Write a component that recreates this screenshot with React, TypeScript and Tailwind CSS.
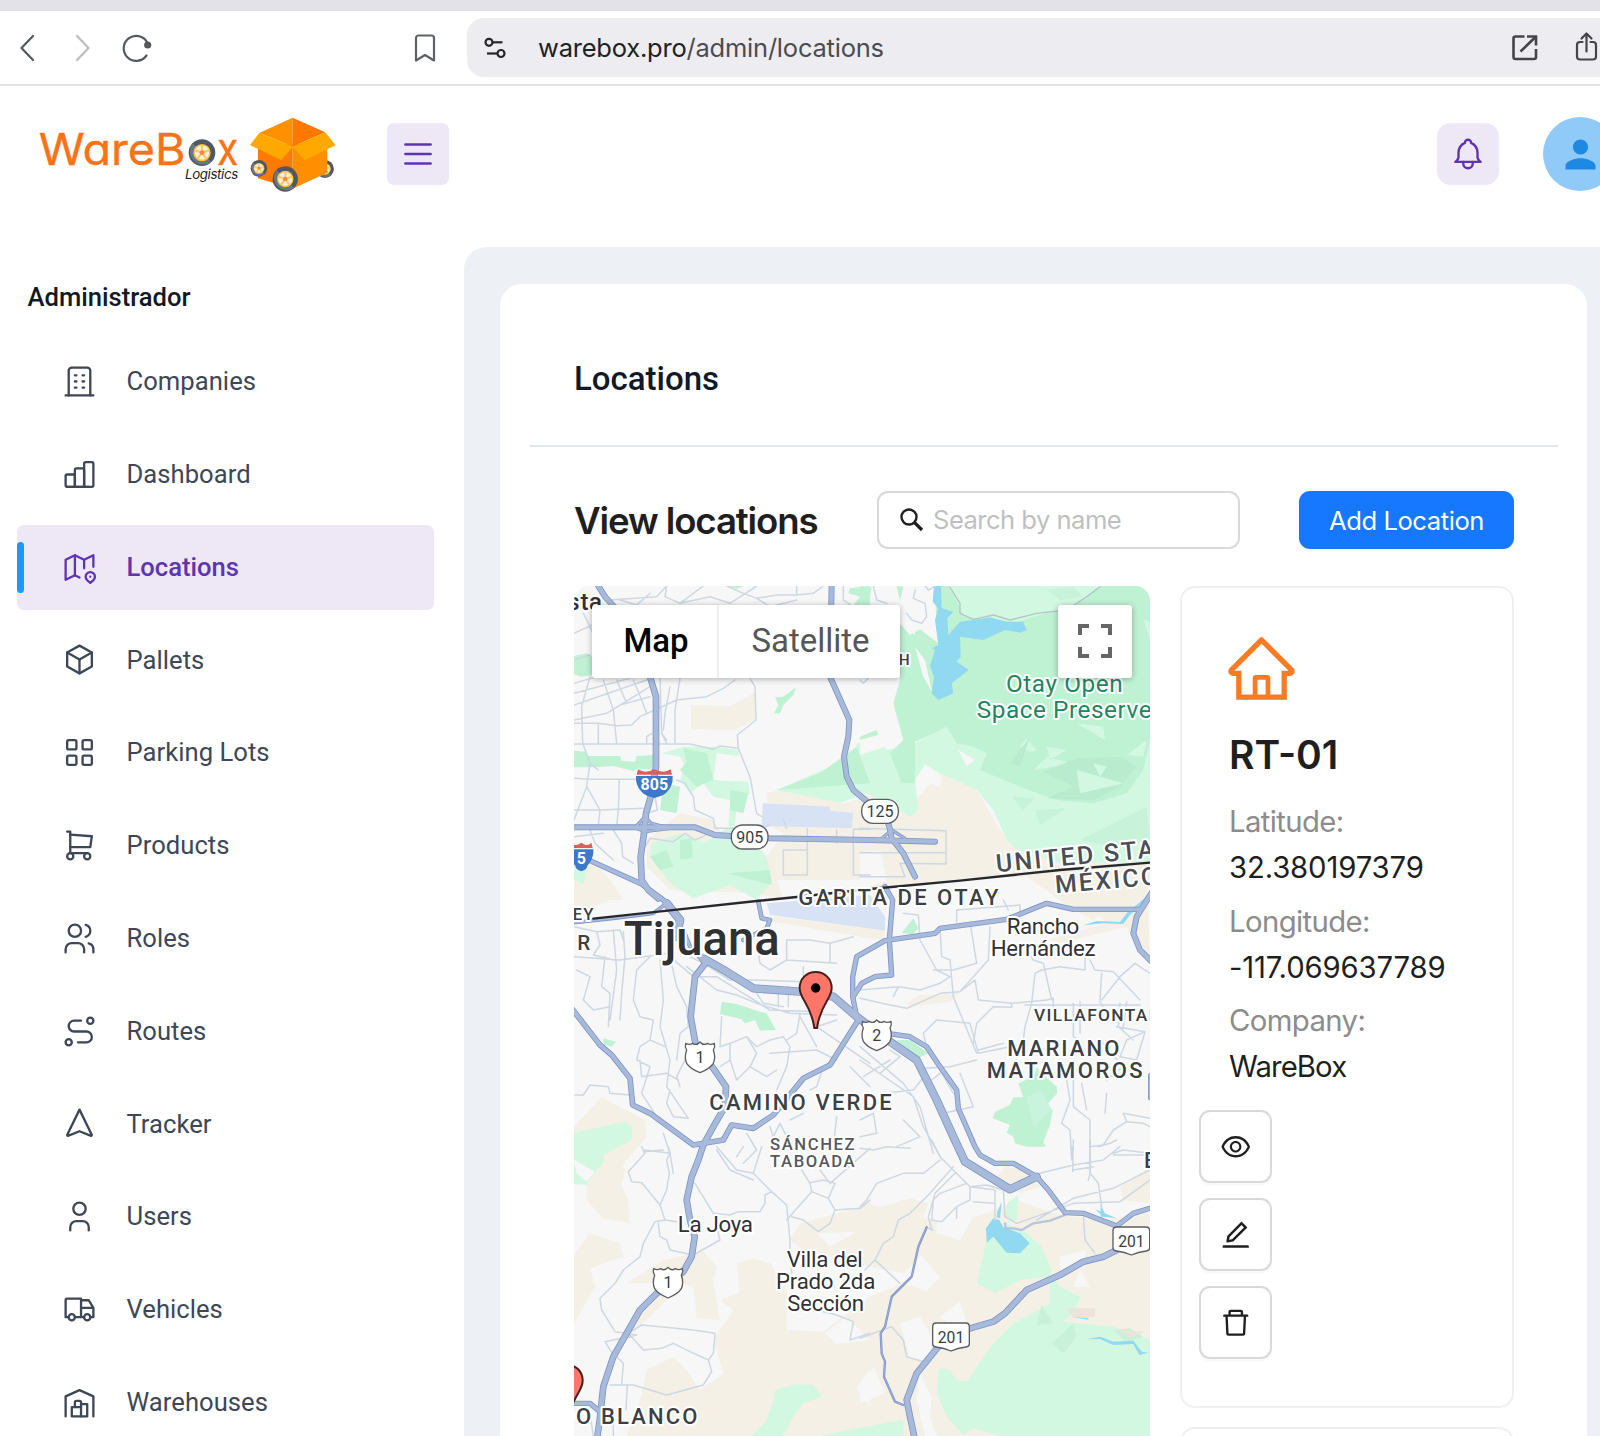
import React from "react";
import {
  AiOutlineHome,
  AiOutlineEye,
  AiOutlineEdit,
  AiOutlineDelete,
} from "react-icons/ai";
import { MdPerson } from "react-icons/md";

/* ---------- Shared outline icon ---------- */

function Outline({ paths, className }: { paths: string[]; className: string }) {
  return (
    <svg
      viewBox="0 0 24 24"
      fill="none"
      stroke="currentColor"
      strokeWidth={1.5}
      strokeLinecap="round"
      strokeLinejoin="round"
      className={className}
    >
      {paths.map((d) => (
        <path key={d} d={d} />
      ))}
    </svg>
  );
}

const ICONS: Record<string, string[]> = {
  building: [
    "M3 21h18",
    "M9 8h1M9 12h1M9 16h1M14 8h1M14 12h1M14 16h1",
    "M5 21V5a2 2 0 0 1 2-2h10a2 2 0 0 1 2 2v16",
  ],
  chart: [
    "M4 12h4a1 1 0 0 1 1 1v6a1 1 0 0 1-1 1H4a1 1 0 0 1-1-1v-6a1 1 0 0 1 1-1z",
    "M10 8h4a1 1 0 0 1 1 1v10a1 1 0 0 1-1 1h-4a1 1 0 0 1-1-1V9a1 1 0 0 1 1-1z",
    "M16 4h4a1 1 0 0 1 1 1v14a1 1 0 0 1-1 1h-4a1 1 0 0 1-1-1V5a1 1 0 0 1 1-1z",
    "M4 20h14",
  ],
  map: [
    "M12 18.5l-3-1.5l-6 3V7l6-3l6 3l6-3v7.5",
    "M9 4v13",
    "M15 7v5.5",
    "M21.121 20.121a3 3 0 1 0-4.242 0c.418.419 1.125 1.045 2.121 1.879c1.051-.89 1.759-1.516 2.121-1.879z",
    "M19 18v.01",
  ],
  box: ["M12 3l8 4.5v9l-8 4.5l-8-4.5v-9l8-4.5", "M12 12l8-4.5", "M12 12v9", "M12 12L4 7.5"],
  grid: [
    "M5 4h4a1 1 0 0 1 1 1v4a1 1 0 0 1-1 1H5a1 1 0 0 1-1-1V5a1 1 0 0 1 1-1z",
    "M15 4h4a1 1 0 0 1 1 1v4a1 1 0 0 1-1 1h-4a1 1 0 0 1-1-1V5a1 1 0 0 1 1-1z",
    "M5 14h4a1 1 0 0 1 1 1v4a1 1 0 0 1-1 1H5a1 1 0 0 1-1-1v-4a1 1 0 0 1 1-1z",
    "M15 14h4a1 1 0 0 1 1 1v4a1 1 0 0 1-1 1h-4a1 1 0 0 1-1-1v-4a1 1 0 0 1 1-1z",
  ],
  cart: [
    "M4 19a2 2 0 1 0 4 0a2 2 0 1 0-4 0",
    "M15 19a2 2 0 1 0 4 0a2 2 0 1 0-4 0",
    "M17 17H6V3H4",
    "M6 5l14 1l-1 7H6",
  ],
  users: [
    "M5 7a4 4 0 1 0 8 0a4 4 0 1 0-8 0",
    "M3 21v-2a4 4 0 0 1 4-4h4a4 4 0 0 1 4 4v2",
    "M16 3.13a4 4 0 0 1 0 7.75",
    "M21 21v-2a4 4 0 0 0-3-3.85",
  ],
  route: [
    "M3 19a2 2 0 1 0 4 0a2 2 0 1 0-4 0",
    "M17 5a2 2 0 1 0 4 0a2 2 0 1 0-4 0",
    "M11 19h5.5a3.5 3.5 0 0 0 0-7h-8a3.5 3.5 0 0 1 0-7H13",
  ],
  nav: ["M12 3l8 16.5l-.5.5l-7.500-3l-7.500 3l-.5-.5z"],
  user: ["M8 7a4 4 0 1 0 8 0a4 4 0 0 0-8 0", "M6 21v-2a4 4 0 0 1 4-4h4a4 4 0 0 1 4 4v2"],
  truck: [
    "M5 17a2 2 0 1 0 4 0a2 2 0 1 0-4 0",
    "M15 17a2 2 0 1 0 4 0a2 2 0 1 0-4 0",
    "M5 17H3V6a1 1 0 0 1 1-1h9v12m-4 0h6m4 0h2v-6h-8m0-5h5l3 5",
  ],
  warehouse: [
    "M3 21V8l9-4l9 4v13",
    "M13 13h4v8H7v-6h6",
    "M13 21v-9a1 1 0 0 0-1-1h-2a1 1 0 0 0-1 1v3",
  ],
  bell: [
    "M10 5a2 2 0 1 1 4 0a7 7 0 0 1 4 6v3a4 4 0 0 0 2 3H4a4 4 0 0 0 2-3v-3a7 7 0 0 1 4-6",
    "M9 17v1a3 3 0 0 0 6 0v-1",
  ],
  menu: ["M4 6h16", "M4 12h16", "M4 18h16"],
};

/* ---------- Browser toolbar ---------- */

function BrowserBar() {
  return (
    <div>
      <div className="h-[11px] bg-[#e3e2e8]" />
      <div className="flex h-[75px] items-center border-b-2 border-[#e4e4e7] bg-white">
        <svg className="ml-[16px] h-[40px] w-[140px] shrink-0" viewBox="0 0 140 40" fill="none" strokeWidth="2.2" strokeLinecap="round" strokeLinejoin="round">
          <path d="M17 8L5.500 20l11.500 12" stroke="#55585d" />
          <path d="M61 8L72.500 20l-11.500 12" stroke="#bcbdc0" />
          <path d="M131.500 15A12.500 12.500 0 1 0 130.500 27.500" stroke="#55585d" />
          <circle cx="131.700" cy="17" r="3.600" fill="#55585d" />
        </svg>
        <svg className="ml-[254px] h-[40px] w-[30px] shrink-0" viewBox="0 0 30 40" fill="none" stroke="#5d6065" strokeWidth="2.200" strokeLinejoin="round">
          <path d="M8.500 7.500h13a2.500 2.500 0 0 1 2.500 2.500v22.500L15 27l-9 5.500V10a2.500 2.500 0 0 1 2.500-2.500z" />
        </svg>
        <div className="ml-[27px] flex h-[59px] flex-1 items-center rounded-l-[17px] bg-[#edecf1] pl-[16px]">
          <svg className="h-[30px] w-[30px] shrink-0" viewBox="0 0 30 30" fill="none" stroke="#26272b" strokeWidth="2.200">
            <circle cx="6" cy="9.300" r="3.500" />
            <path d="M9.500 9.300H19.500" />
            <circle cx="18" cy="20.500" r="3.500" />
            <path d="M4 20.500h10.500" />
          </svg>
          <div className="ml-[25px] mt-[2px] whitespace-nowrap font-[Inter] text-[25.500px] tracking-[-0.22px] text-[#4b4c51]">
            <span className="text-[#202124]">warebox.pro</span>/admin/locations
          </div>
          <div className="flex-1" />
          <svg className="h-[40px] w-[89px] shrink-0" viewBox="0 0 89 40" fill="none" stroke="#444549">
            <path d="M13.500 8.500H4.500a2 2 0 0 0-2 2v18.500a2 2 0 0 0 2 2h18.500a2 2 0 0 0 2-2V21" strokeWidth="2.600" />
            <path d="M16 8.500h9v9" strokeWidth="2.600" />
            <path d="M9.500 23.500L24.500 9" strokeWidth="2.600" />
            <g strokeWidth="2.200" strokeLinecap="round" strokeLinejoin="round">
              <path d="M71.500 14h-2.500a3 3 0 0 0-3 3v11.500a3 3 0 0 0 3 3h13a3 3 0 0 0 3-3V17a3 3 0 0 0-3-3h-2.500" />
              <path d="M75.500 23.500V6M70.500 10.500l5-5l5 5" />
            </g>
          </svg>
        </div>
      </div>
    </div>
  );
}

/* ---------- Logo ---------- */

function Wheel({ x, y, r }: { x: number; y: number; r: number }) {
  return (
    <g transform={`translate(${x} ${y}) scale(${r / 40})`}>
      <circle r="40" fill="#505862" />
      <path d="M-28-28A40 40 0 0 0 28 28z" fill="#6a7684" />
      <circle r="26" fill="#f6c544" />
      <circle r="21.500" fill="#fdf0dc" />
      <path d="M0 0V-22M0 0L21-7M0 0L13 18M0 0L-13 18M0 0L-21-7" stroke="#f8ca6a" strokeWidth="7" />
      <circle r="7" fill="#f58a3c" />
    </g>
  );
}

function Logo() {
  return (
    <svg className="h-[78.300px] w-[303.300px] shrink-0" viewBox="110 345 910 235">
      <text x="115" y="494" textLength="441" lengthAdjust="spacingAndGlyphs" fontFamily="Inter" fontSize="131" fill="#f97316" stroke="#f97316" strokeWidth="1" style={{ fontFeatureSettings: "'cv11' 1" }}>
        WareB
      </text>
      <text x="650" y="494" textLength="64" lengthAdjust="spacingAndGlyphs" fontFamily="Inter" fontSize="136" fill="#f97316" stroke="#f97316" strokeWidth="1">
        x
      </text>
      <Wheel x={605} y={458} r={40} />
      <text x="554" y="536" textLength="160" fontFamily="Inter" fontSize="40" fontStyle="italic" fill="#1f2024" style={{ fontFeatureSettings: "'cv11' 1" }}>
        Logistics
      </text>
      <Wheel x={974} y={507} r={27} />
      <path d="M773 440L877 430V566L773 535z" fill="#ff7a00" />
      <path d="M877 430L981 440V518L877 566z" fill="#ff8f00" />
      <path d="M778 398L877 353V440z" fill="#ff9100" />
      <path d="M877 353L975 397L877 440z" fill="#ff7800" />
      <path d="M778 398L877 440L843 481L749 435z" fill="#ffa800" />
      <path d="M975 397L877 440L913 481L1006 436z" fill="#ffa800" />
      <Wheel x={776} y={505} r={25} />
      <Wheel x={855} y={537} r={38} />
    </svg>
  );
}

function Header() {
  return (
    <header className="flex h-[136px] shrink-0 items-center">
      <div className="ml-[37px]">
        <Logo />
      </div>
      <button className="ml-[47px] flex h-[62px] w-[62px] items-center justify-center rounded-[7px] bg-[#ede7f6] text-[#5e35b1]">
        <Outline paths={ICONS.menu} className="h-[38px] w-[38px]" />
      </button>
      <div className="flex-1" />
      <button className="flex h-[62px] w-[62px] items-center justify-center rounded-[14px] bg-[#ede7f6] text-[#5e35b1]">
        <Outline paths={ICONS.bell} className="h-[38px] w-[38px]" />
      </button>
      <div className="-mr-[17px] ml-[44px] flex h-[74px] w-[74px] shrink-0 items-center justify-center rounded-full bg-[#90caf9]">
        <MdPerson className="h-[45px] w-[45px] text-[#1e88e5]" />
      </div>
    </header>
  );
}

/* ---------- Sidebar ---------- */

const NAV: { label: string; icon: string }[] = [
  { label: "Companies", icon: "building" },
  { label: "Dashboard", icon: "chart" },
  { label: "Locations", icon: "map" },
  { label: "Pallets", icon: "box" },
  { label: "Parking Lots", icon: "grid" },
  { label: "Products", icon: "cart" },
  { label: "Roles", icon: "users" },
  { label: "Routes", icon: "route" },
  { label: "Tracker", icon: "nav" },
  { label: "Users", icon: "user" },
  { label: "Vehicles", icon: "truck" },
  { label: "Warehouses", icon: "warehouse" },
];

function Sidebar() {
  return (
    <aside className="w-[464px] shrink-0 overflow-hidden pl-[16.500px] pr-[30px] pt-[55px] font-[Roboto]">
      <div className="flex h-[40px] items-center pl-[11px] text-[25.600px] font-medium text-[#121926]">
        Administrador
      </div>
      <nav className="mt-[22px] flex flex-col gap-[7.800px]">
        {NAV.map((n) => {
          const on = n.label === "Locations";
          return (
            <div
              key={n.label}
              className={
                on
                  ? "relative flex h-[85px] shrink-0 items-center rounded-[7px] bg-[#ede7f6] pl-[44.500px] text-[#5e35b1]"
                  : "relative flex h-[85px] shrink-0 items-center pl-[44.500px] text-[#3d4757]"
              }
            >
              {on && <div className="absolute left-0 top-[17px] h-[51px] w-[7.500px] rounded-[4px] bg-[#2196f3]" />}
              <Outline paths={ICONS[n.icon]} className="h-[37px] w-[37px]" />
              <span
                className={
                  on
                    ? "ml-[28.500px] text-[25.600px] font-medium"
                    : "ml-[28.500px] text-[25.600px] tracking-[0.04px]"
                }
              >
                {n.label}
              </span>
            </div>
          );
        })}
      </nav>
    </aside>
  );
}

/* ---------- Map ---------- */

/* Map drawing is divided in six tiles; each shape is given in its tile's units. */
const T: Record<string, string> = {
  A: "translate(0 0)",
  B: "translate(870 0)",
  C: "translate(0 840)",
  D: "translate(870 840)",
  E: "translate(0 1680)",
  F: "translate(870 1680)",
};

const BEIGE = "#f4f0e6";
const MINT = "#d2f8e2";
const GREEN = "#bff1d3";
const LAND = "#f7f7f7";
const WATER = "#90d9f0";

const AREAS: [string, string, string][] = [
  ["A", BEIGE, "M363 375L480 378L555 338V420L490 450L363 448z"],
  ["A", BEIGE, "M590 640L650 625L820 670L900 650L960 680V900H600L590 830L640 760L600 740z"],
  ["A", BEIGE, "M230 780L330 700L430 720L480 800L600 830L640 960L560 940L300 930L230 860z"],
  ["A", BEIGE, "M12 850L60 830L120 900L160 960L60 960L12 1000z"],
  ["A", GREEN, "M12 228L50 220L66 228V285L35 290L12 282z"],
  ["A", GREEN, "M465 18H520L500 27z"],
  ["A", GREEN, "M840 25L900 18V75H850L870 50L835 40z"],
  ["A", GREEN, "M615 352L640 350L678 322L670 345L640 375L630 400L612 400L625 375z"],
  ["A", GREEN, "M12 512L45 515L55 528H150L155 542L195 545L200 528L250 525V570L205 565L190 573L130 558L80 562H12z"],
  ["A", MINT, "M275 520L340 500L430 500L508 510L505 528L440 520L430 600L535 605L540 640L500 660L495 740L475 738L480 660L430 650L400 610L360 640L330 600L345 560L330 530z"],
  ["A", GREEN, "M340 505L410 520L430 600L380 620L330 570L350 545z"],
  ["A", GREEN, "M280 610L330 620L320 700L270 690z"],
  ["A", GREEN, "M480 630L535 640L520 700L480 690z"],
  ["A", MINT, "M245 790L330 760L400 790L470 745L520 740L590 830L605 905L560 960L480 915L370 955L300 910L270 870L240 830z"],
  ["A", GREEN, "M240 830L290 810L310 860L270 870zM330 780L365 775L368 835L330 838zM470 880L600 870L605 915L470 880z"],
  ["A", MINT, "M12 870L50 868L45 900L12 960z"],
  ["B", BEIGE, "M0 640L175 650L240 580L350 630L440 780L480 810L870 820V900L700 1020L640 990L500 890L300 900L0 930z"],
  ["B", LAND, "M0 820L60 810L80 900L0 930z"],
  ["B", MINT, "M-250 630L-90 560L-10 500L-10 490L60 475L80 510L165 490L255 440L260 18H850L870 30V845L600 850L465 805L440 780L400 690L350 630L240 580L195 555L165 600L175 690L150 710L100 680L20 640L-60 668z"],
  ["B", GREEN, "M-250 630L-120 580L-10 500L30 610z"],
  ["B", GREEN, "M222 18H265L300 80L310 110L380 120L470 125L560 100L640 80L720 18H870V480L850 570L800 640L700 670L590 660L480 620L360 570L380 520L340 500L290 490L260 440L200 470L165 485V610H125L90 520L130 480L100 370L120 300L110 120L150 165L180 148L235 190z"],
  ["B", GREEN, "M110 18L130 20L120 62zM0 470L50 450L55 465L0 480zM0 18L35 22L30 50L0 65z"],
  ["B", LAND, "M165 200L195 240L216 335L190 290zM295 510L345 540L320 558zM170 592L197 553L246 590L240 621zM150 150L165 165L160 120z"],
  ["B", LAND, "M0 480L60 475L75 500L0 525z"],
  ["B", MINT, "M520 570L640 550L560 530zM480 500L500 475L530 510L510 515zM650 430L730 440L735 480zM800 525L860 480L850 530zM850 118L870 125V180zM560 500L620 510L570 540z"],
  ["B", "#b9ecce", "M450 550L510 470L480 560zM550 575L650 535L780 530L830 560L780 620L700 660L560 655L640 620z"],
  ["B", MINT, "M650 570L790 610L660 640zM700 550L740 560L720 590z"],
  ["B", "#c8f3da", "M455 650L525 655L490 690zM525 690L620 685L540 735zM660 780L740 740L860 680L870 780L760 800zM560 30L640 20L670 50L600 60z"],
  ["A", "#d8e2f5", "M578 670L780 680V692L850 698L845 745L575 738z"],
  ["B", WATER, "M222 18H243L245 85L280 95L262 115L265 165L300 125L340 120L390 112L440 125L490 125L500 150L480 158L435 150L370 180L300 170L302 230L290 245L326 270L275 310L280 340L235 360L215 340L222 290L210 258L225 210L215 205L235 195L225 120L235 85L218 65z"],
  ["C", "#d8e2f5", "M590 130L900 105L945 170V212L600 165z"],
  ["C", BEIGE, "M600 168L945 212L940 240L840 225L610 185z"],
  ["C", BEIGE, "M12 60L120 110L110 125L12 160z"],
  ["C", GREEN, "M455 425L500 432L570 455L590 460L618 510L570 512L555 480L525 490L515 478L450 462zM100 535L138 545L125 560L100 552z"],
  ["C", BEIGE, "M12 800L95 712L225 780L230 830L170 900L100 1000L12 930z"],
  ["C", MINT, "M12 818L165 785L188 800L185 840L100 885L110 960L60 975L12 972z"],
  ["D", GREEN, "M125 220L160 175L175 205L160 222zM110 540L150 540L205 580L170 597z"],
  ["D", GREEN, "M530 622L545 640L590 680L592 700L560 735L578 750L570 795L550 845L558 860H500L465 850L460 830L440 818L450 795L398 775L405 755L450 735L460 712L490 712L475 670L520 650z"],
  ["D", "#c9f3dc", "M500 712L545 690L575 750L520 800z"],
  ["D", BEIGE, "M690 60L860 30L870 300L830 260L800 200L600 250L560 240L740 190L680 120z"],
  ["D", WATER, "M670 196L710 183L780 186L800 160L865 105L868 112L810 165L790 192L730 190z"],
  ["D", BEIGE, "M140 430L180 405L300 400L270 425L150 440z"],
  ["E", BEIGE, "M50 130L130 30L165 90L155 140L175 180L180 250L100 235L50 180z"],
  ["E", BEIGE, "M12 345L60 280L150 310L160 350L60 385L75 440L12 550z"],
  ["E", BEIGE, "M170 430L280 360L400 335L440 380L430 420L450 540L380 535L370 440L340 430L230 540L200 560L215 510L280 430z"],
  ["E", BEIGE, "M500 370L550 355L600 370L650 450L650 570L760 575L900 470L1000 430L1200 500L1100 800L1050 888H170L210 780L230 690L310 650L350 690L390 750L460 700L430 600L490 510L450 480L510 455z"],
  ["E", BEIGE, "M660 300L690 250L900 195L1100 240L1100 300L1000 400L900 380L700 330z"],
  ["F", BEIGE, "M0 200L20 180L50 205L150 175L205 190L180 260L110 330L20 310z"],
  ["F", BEIGE, "M170 330L200 270L300 300L340 230L380 220L470 180L600 225L720 240L870 220V888H0V600L90 560L140 520L240 410z"],
  ["F", BEIGE, "M410 110L440 75L520 110L540 140L480 160zM780 140L870 80V190L790 180z"],
  ["F", LAND, "M120 550L180 530L215 590L215 640L190 660L150 655zM240 530L300 485L320 550L280 560zM180 700L215 770L210 830L230 888H195L170 780zM0 760L40 680L75 760L0 790zM640 440L660 390L690 440zM600 350L680 330L670 370L600 420z"],
  ["E", LAND, "M860 740L900 690V790L880 780zM740 280L860 275L780 320zM765 580L830 530L900 600L800 612z"],
  ["F", MINT, "M350 430L380 300L440 250L500 280L545 320L575 390L570 410L480 420L405 460z"],
  ["F", MINT, "M430 225L445 185L475 165L470 240L450 245z"],
  ["F", MINT, "M570 405L600 440L660 470L640 520L610 545L760 560L870 600V888H420L340 865L310 885L260 830L230 760L238 685L270 690L290 720L320 725L400 610L460 550L570 490z"],
  ["F", "#c9f1da", "M530 555L545 495L580 550zM575 610L640 550L650 590L610 640zM760 570L810 565L850 590L800 605z"],
  ["F", "#ece4da", "M620 505L705 505V530L640 535zM770 570L855 575L810 592z"],
  ["F", WATER, "M378 265L400 235L418 240L430 262L480 280L509 310L480 340L440 338L400 290L380 308zM412 215L425 185L420 235L410 232z"],
  ["F", WATER, "M680 598L720 590L760 605L820 602L845 635L865 638L838 645L820 612L760 615L720 597zM640 532L685 534V539zM705 208L770 235L730 230zM722 195L740 230H722z"],
  ["E", MINT, "M545 888L590 840L610 780L615 750L680 732L730 735L755 770L700 790L670 830L640 888zM750 888L830 870L1000 840V888z"],
  ["E", LAND, "M12 60L75 95L50 125L20 100z"],
];

const MINOR: [string, string][] = [
  ["A", "M12 160L100 120M12 240L60 225M40 100L70 160M90 18L120 60L260 50L290 18M290 18L285 50L330 70L400 18M330 70L420 50L480 70L560 18M470 18L520 40L560 55L600 80M560 55L620 45L680 45V18M680 45L730 40L760 18M600 80L680 60M820 18V60L850 80M150 60L200 75L240 40"],
  ["A", "M12 310L80 290M12 340L180 295M12 375L230 300M12 420L110 400L240 320M60 290L35 380L38 490M85 430V490M12 430H85L140 437L185 435L210 410L265 385L320 360L410 350L460 325L495 300M100 300L130 390L140 490M140 300L170 370M190 300L215 360L230 400M150 375L240 350M270 290L275 460L290 490M300 320L285 400L280 450M330 295L315 390V488M230 488V470L245 460M275 460L290 480"],
  ["A", "M12 492H360L430 508L450 498L505 505M505 505L502 465L558 420L555 320L540 295M505 505L540 590L560 700L575 710M38 490L60 550L50 620L90 690H12M12 595L60 598H235M60 550L85 570M148 598L145 690M50 620L12 720M90 690L220 685M90 690L85 735M130 750L155 790L158 830L190 850M60 750L75 790L130 840M12 770L100 760M145 690L140 740"],
  ["A", "M320 600L345 610L370 650L375 690L430 715L435 745M225 800L240 775L310 785L345 760L375 780L430 755M640 810H712V885H640zM712 745V810M800 750V790M850 748H900M850 748V885H900M640 720L650 745M435 745L575 745L600 735M255 650L262 690L230 700M870 300L880 310L900 290"],
  ["B", "M40 18L50 60L80 70M165 30L160 55L195 70L200 110L185 130L155 120L140 100M195 18L205 30L225 20M0 745L258 752V852L120 850L135 890H0M0 818H258"],
  ["C", "M12 200L80 215L150 210L160 240M80 215L90 255L70 285L130 300M12 290L150 300L300 280M105 290L95 380L120 400L115 500M130 210L140 330L120 480M160 215L165 290L155 400L150 480M240 290L200 330L190 420L210 470L250 480M270 300L280 420L270 500L300 600L290 680M300 290L320 380L350 440L355 500M250 480L240 540L210 560L200 600L240 620M240 540L285 560M210 600L215 650L290 640L325 660M240 620L215 700L260 770M290 680L355 775L310 770L290 730L300 690M355 580L320 650L330 680M355 500L330 520L320 600M20 330L60 350L40 420L70 450L120 440M12 705H40L60 675L115 680L120 700L180 705"],
  ["C", "M300 290L370 350L440 350L520 400L600 450L760 455M350 320L440 390L500 405L560 430L660 460L800 465M340 280L400 310L480 360L550 360L700 365M450 330L540 390M560 400L580 430L640 440M560 240L570 310L600 330L650 300V240L720 240M650 300L800 310M700 320V360M720 240L780 250L850 230M780 250V310M655 380V440M625 385V440M455 470L450 560L480 550L530 530L560 560L600 540L640 530L660 560L650 620M480 600L500 660L540 620L560 580L530 530M480 550L480 600L450 620M650 620L620 690M540 620L590 650L620 630M600 580L740 570L800 600M690 460L680 520L650 540M690 470L740 560M740 500L900 610M740 500L800 480M760 620L740 680L720 690M840 620L900 680M800 770L790 860L720 870M600 800L610 830L630 790L650 830M660 780L700 760M280 820L300 880L310 940M220 875L280 870M440 870L480 930L550 960M530 820L560 870L520 910"],
  ["D", "M130 160L175 165L180 240L230 330L270 350M240 205L245 290L270 300L280 410L350 580M280 330L220 330M330 185L350 310L280 330M390 200L385 300L300 395L240 400L140 445L90 435L0 415M0 390L115 380L180 390L240 370L270 350M115 380L100 410M300 395L345 360L355 420L455 430L455 442L400 440L350 490L340 550M455 430L560 420L580 415M290 150L480 135V160M290 150V185M430 120L445 150"],
  ["D", "M500 270L520 300L550 310L575 420M525 340L515 430L495 500L490 540M525 340L545 330L600 320L675 330V290M690 300L705 330L760 335L840 420M725 340L720 420M725 420L780 350L825 310L870 340M495 435H840M580 415V460M640 430V530L660 540M660 425V520M720 425L740 460M780 430L775 500L820 540M800 425L790 500M770 500L855 515L830 600L780 590L800 540L855 515M730 550L790 620L740 660M190 520L230 480L330 490L355 580M190 520L200 560M355 580L500 550M355 570L430 550M350 600L270 620L190 625M0 600L160 710L190 800L240 890M0 560L130 670L180 740L220 880M60 640L120 590L90 570M10 650L90 600M70 700L160 690L200 640M240 630L280 700M250 760L340 740L300 640M215 660L240 640M130 780L180 830L110 860M0 780L40 760L50 820L0 830"],
  ["D", "M620 660L630 720L605 790L630 810L635 900M640 660V740L690 780V940L685 960M665 670L680 750M740 700L735 760M690 860L730 855L760 810L800 785L850 790L870 800M790 760L800 785M790 760L870 775M760 880L790 870L870 880"],
  ["E", "M215 20L225 40L175 95L185 125L215 128L270 195L290 150L298 100L290 60L300 40L295 20M225 30L300 40M270 195L285 240L320 245M285 240L255 245L220 310L210 350L160 390L135 430L90 475L95 510L135 575L200 585L105 605L130 645M265 250L270 290L290 300L300 330L370 345M375 130L430 220L450 300L370 345M430 220L480 225L505 215L570 215L585 190V165L605 155M440 20L500 90L550 100L605 155L650 195L660 300V330M550 100L575 20M500 50L520 20M135 645L160 670L155 735H120L190 735L290 765L400 735L425 695L415 660L430 640L435 580L370 570L215 555L175 580L220 630L275 625L310 610L360 635L415 660M172 735L168 810M130 850V888M60 820L70 888"],
  ["E", "M650 240L725 155L720 130L695 90M725 155L775 175L795 130L760 120L720 128M775 175L795 210L780 250L745 275L700 240L665 230M795 210L870 205L900 180M780 130L900 25M750 90L780 130M660 330L665 400M760 515L800 525L850 545L840 600L900 580"],
  ["F", "M0 25L40 30L80 20L150 25M240 60L190 100L130 100L50 130L20 180L0 200M280 80L205 165L150 220L115 240L100 290L70 310L45 360L120 430M45 360L15 390M215 270L205 230L225 160L285 100M320 130L240 160L220 180L215 240L245 245L290 200L330 180L330 140L380 135L430 150L435 230L470 250L640 190L780 185L870 120M215 0L240 50L330 140L405 150L405 240M540 100L640 75L730 60L780 20M640 75L635 20M690 0V100L715 130L725 200M530 240L640 175L760 145L870 90M340 185L400 190M290 200V235M670 220L675 300L705 340M760 45L870 45M640 90L700 80M0 595L95 560L130 600L140 650L190 665M640 0L638 95M715 20L750 10L770 0M200 262L220 270"],
];

const MID: [string, string][] = [
  ["F", "M435 250L437 265H460L485 270L520 250L570 242L615 225"],
];

const TRAILS: [string, string][] = [
  ["B", "M270 22L300 70L300 100L340 118L400 105L450 120L530 100L620 90L680 50L720 20"],
];

const MAJOR: [string, number, string][] = [
  ["A", 16, "M80 10L105 50L160 110L240 290"],
  ["A", 18, "M240 290L258 350V560L245 640L228 700L222 760L212 830L215 900L235 930L265 955"],
  ["A", 16, "M0 742H375L435 765L600 775L900 780L1095 785"],
  ["A", 8, "M195 742L225 710L245 730L300 745L225 755L200 745"],
  ["A", 16, "M785 10L780 290L838 420L835 470L822 530L830 590L850 630L895 668L940 690L958 740L965 775L1000 820L1035 890"],
  ["A", 8, "M930 780L965 750L1005 775"],
  ["A", 14, "M60 842L215 912L300 975"],
  ["C", 9, "M12 188L130 175L250 160L290 130"],
  ["C", 24, "M290 130L330 180L320 230"],
  ["C", 11, "M340 210L360 260L400 305"],
  ["C", 23, "M400 295L470 335L550 385L690 395L790 410L860 470L960 545L1040 600L1100 720L1150 830L1185 905L1320 988L1400 950"],
  ["D", 14, "M80 520L150 530L200 560L240 620L290 690L295 745L345 860L360 885L405 910H460L530 950L565 990L615 1058L670 1060L770 1098L820 1060L880 1042"],
  ["C", 18, "M410 305L375 350L362 470L378 560L430 625L468 680L465 740L430 800L400 855L385 900L365 950L350 1020L360 1080L374 1130L365 1190L340 1235L260 1300L210 1350L130 1490L100 1580L88 1690L82 1730"],
  ["C", 15, "M5 445L90 555L125 585L180 655L188 735L240 760L370 855L460 840L485 795L550 805L610 765L700 655L780 615L865 480"],
  ["C", 14, "M860 470L848 410V350L860 290L945 242L1095 220L1110 205L1310 178L1430 130L1510 148H1710"],
  ["D", 14, "M75 80L98 120L88 240L95 345L45 350L5 370L-20 410"],
  ["D", 16, "M880 90L830 170L820 220L840 270L880 310"],
  ["C", 12, "M565 125L575 175L600 180L590 205L520 240"],
  ["D", 10, "M870 645V715"],
  ["F", 18, "M770 330L730 350L670 365L600 405L500 450L435 520L400 545L330 565L235 620L170 700L140 780L150 830L165 900"],
  ["F", 5, "M200 262L175 320L155 410L95 470L75 560L62 580L65 640L75 665L72 710L105 785L130 795"],
  ["E", 14, "M0 790H60L90 815"],
];

function Label({
  x,
  y,
  size,
  len,
  children,
  color = "#3c3f43",
  weight = 500,
  rotate,
}: {
  x: number;
  y: number;
  size: number;
  len?: number;
  children: string;
  color?: string;
  weight?: number;
  rotate?: number;
}) {
  return (
    <text
      x={x}
      y={y}
      fontSize={size}
      textLength={len}
      fill={color}
      fontWeight={weight}
      transform={rotate ? `rotate(${rotate} ${x} ${y})` : undefined}
      stroke="#fff"
      strokeWidth={12}
      strokeLinejoin="round"
      paintOrder="stroke"
      fontFamily="Roboto"
    >
      {children}
    </text>
  );
}

function Interstate({ x, y, w, label }: { x: number; y: number; w: number; label: string }) {
  const h = w / 2;
  return (
    <g transform={`translate(${x} ${y})`}>
      <path d={`M${-h + 6} -44Q${-h / 2} -30 0 -44Q${h / 2} -30 ${h - 6} -44L${h - 2} -28H${-h + 2}z`} fill="#d9605c" />
      <path d={`M${-h} -24H${h}Q${h + 2} 5 ${h - 18} 25Q${h / 2} 36 0 42Q${-h / 2} 36 ${-h + 18} 25Q${-h - 2} 5 ${-h} -24z`} fill="#3d79cb" />
      <text y="19" fontSize="48" fontWeight="700" fill="#fff" textAnchor="middle" fontFamily="Roboto">
        {label}
      </text>
    </g>
  );
}

function Pill({ x, y, label }: { x: number; y: number; label: string }) {
  return (
    <g transform={`translate(${x} ${y})`}>
      <rect x="-55" y="-36" width="110" height="72" rx="34" fill="#fff" stroke="#5b5d61" strokeWidth="4" />
      <text y="17" fontSize="48" fill="#3a3c40" textAnchor="middle" fontFamily="Roboto">
        {label}
      </text>
    </g>
  );
}

function Crest({ x, y, label }: { x: number; y: number; label: string }) {
  return (
    <g transform={`translate(${x} ${y})`}>
      <path d="M-43-42Q-32-36-22-42Q-10-34 0-46Q10-34 22-42Q32-36 43-42Q46-32 40-22Q48 0 40 18Q30 34 0 46Q-30 34-40 18Q-48 0-40-22Q-46-32-43-42z" fill="#fff" stroke="#5b5d61" strokeWidth="4" strokeLinejoin="round" />
      <text y="17" fontSize="48" fill="#3a3c40" textAnchor="middle" fontFamily="Roboto">
        {label}
      </text>
    </g>
  );
}

function StateRoad({ x, y, label }: { x: number; y: number; label: string }) {
  return (
    <g transform={`translate(${x} ${y})`}>
      <path d="M-44-41H44Q55-41 55-30V22Q55 30 45 31Q20 34 0 43Q-20 34-45 31Q-55 30-55 22V-30Q-55-41-44-41z" fill="#fff" stroke="#5b5d61" strokeWidth="4" />
      <text y="18" fontSize="47" fill="#3a3c40" textAnchor="middle" fontFamily="Roboto">
        {label}
      </text>
    </g>
  );
}

function Pin({ x, y }: { x: number; y: number }) {
  return (
    <g transform={`translate(${x} ${y})`}>
      <path d="M0-172C-28-172-48-151-48-124C-48-90-14-76-4-4H4C14-76 48-90 48-124C48-151 28-172 0-172z" fill="#fe7569" stroke="#42211e" strokeWidth="6" />
      <circle cy="-124" r="14" fill="#000" />
    </g>
  );
}

function MapArt() {
  return (
    <svg className="block h-[850px] w-[576px]" viewBox="12 18 1728 2550" strokeLinecap="round" strokeLinejoin="round">
      <rect width="1760" height="2600" fill={LAND} />
      {AREAS.map(([t, c, d], i) => (
        <path key={i} transform={T[t]} d={d} fill={c} />
      ))}
      <g fill="none" stroke="#cdd8e3" strokeWidth="4.500">
        {MINOR.map(([t, d], i) => (
          <path key={i} transform={T[t]} d={d} />
        ))}
      </g>
      <g fill="none" stroke="#b3c7c4" strokeWidth="4">
        {TRAILS.map(([t, d], i) => (
          <path key={i} transform={T[t]} d={d} />
        ))}
      </g>
      <g fill="none" stroke="#b9c4da" strokeWidth="7">
        {MID.map(([t, d], i) => (
          <path key={i} transform={T[t]} d={d} />
        ))}
      </g>
      <g fill="none" stroke="#7f95c8">
        {MAJOR.map(([t, w, d], i) => (
          <path key={i} transform={T[t]} d={d} strokeWidth={w + 2} />
        ))}
      </g>
      <g fill="none" stroke="#a8bad9">
        {MAJOR.map(([t, w, d], i) => (
          <path key={i} transform={T[t]} d={d} strokeWidth={w - 3} />
        ))}
      </g>
      <path d="M70 1016L300 991L560 963L680 951L900 927L1170 902L1470 870L1740 848" fill="none" stroke="#26282c" strokeWidth="7" />

      <Label x={-8} y={90} size={72} color="#2f3135" len={104}>sta</Label>
      <Label x={986} y={255} size={46}>H</Label>
      <Label x={1308} y={337} size={73} color="#21865f" weight={400} len={350}>Otay Open</Label>
      <Label x={1220} y={414} size={73} color="#21865f" weight={400} len={525}>Space Preserve</Label>
      <Label x={1280} y={877} size={75} len={626} rotate={-5.500} color="#4b4e53">UNITED STATES</Label>
      <Label x={1457} y={940} size={75} len={310} rotate={-5} color="#4b4e53">MÉXICO</Label>
      <Label x={685} y={975} size={66} len={600}>GARITA DE OTAY</Label>
      <Label x={8} y={1020} size={50} len={62}>EY</Label>
      <Label x={22} y={1110} size={62}>R</Label>
      <Label x={161} y={1125} size={142} len={468} color="#2f3135">Tijuana</Label>
      <Label x={1310} y={1062} size={67} len={218} weight={400} color="#2f3135">Rancho</Label>
      <Label x={1262} y={1127} size={67} len={315} weight={400} color="#2f3135">Hernández</Label>
      <Label x={1392} y={1324} size={52} len={420}>VILLAFONTANA</Label>
      <Label x={1312} y={1428} size={66} len={336}>MARIANO</Label>
      <Label x={1250} y={1494} size={66} len={468}>MATAMOROS</Label>
      <Label x={418} y={1590} size={66} len={547}>CAMINO VERDE</Label>
      <Label x={600} y={1711} size={50} len={254} color="#55585d">SÁNCHEZ</Label>
      <Label x={600} y={1761} size={50} len={254} color="#55585d">TABOADA</Label>
      <Label x={1722} y={1763} size={66}>B</Label>
      <Label x={323} y={1957} size={67} len={226} weight={400} color="#2f3135">La Joya</Label>
      <Label x={650} y={2060} size={67} len={228} weight={400} color="#2f3135">Villa del</Label>
      <Label x={618} y={2127} size={67} len={298} weight={400} color="#2f3135">Prado 2da</Label>
      <Label x={652} y={2193} size={67} len={230} weight={400} color="#2f3135">Sección</Label>
      <Label x={18} y={2531} size={66} len={364}>O BLANCO</Label>

      <Interstate x={253} y={612} w={110} label="805" />
      <Interstate x={34} y={832} w={72} label="5" />
      <Pill x={539} y={771} label="905" />
      <Pill x={930} y={694} label="125" />
      <Crest x={390} y={1432} label="1" />
      <Crest x={920} y={1366} label="2" />
      <Crest x={294} y={2108} label="1" />
      <StateRoad x={1684} y={1982} label="201" />
      <StateRoad x={1143} y={2270} label="201" />
      <Pin x={737} y={1348} />
      <Pin x={-10} y={2526} />
    </svg>
  );
}

function MapPanel() {
  return (
    <div className="relative h-[850px] w-[576px] shrink-0 overflow-hidden rounded-t-[15px] font-[Roboto]">
      <MapArt />
      <div className="absolute left-[18px] top-[18.500px] flex h-[73px] overflow-hidden rounded-[3px] bg-white text-[33px] shadow-[0_1px_6px_rgba(0,0,0,0.3)]">
        <div className="flex w-[127px] items-center justify-center border-r-2 border-[#efefef] pl-[3px] font-medium text-black">Map</div>
        <div className="flex w-[181px] items-center justify-center pl-[2px] text-[#565656]">Satellite</div>
      </div>
      <div className="absolute right-[18px] top-[18.500px] flex h-[73px] w-[74px] items-center justify-center rounded-[3px] bg-white shadow-[0_1px_6px_rgba(0,0,0,0.3)]">
        <svg viewBox="0 0 34 34" className="h-[34px] w-[34px]" fill="none" stroke="#666" strokeWidth="4">
          <path d="M2 11V2h9M23 2h9v9M32 23v9h-9M11 32H2v-9" />
        </svg>
      </div>
    </div>
  );
}

/* ---------- Content ---------- */

function Field({ label, value, loose }: { label: string; value: string; loose?: boolean }) {
  return (
    <div className="mb-[7.500px]">
      <div className="h-[46px] leading-[46px] tracking-[-0.600px] text-[#8c8c8c]">{label}</div>
      <div
        className={
          loose
            ? "h-[46px] leading-[46px] tracking-[-0.150px] text-[#1f1f1f]"
            : "h-[46px] leading-[46px] tracking-[-0.900px] text-[#1f1f1f]"
        }
      >
        {value}
      </div>
    </div>
  );
}

function ActionButton({ children }: { children: React.ReactNode }) {
  return (
    <button className="flex h-[73px] w-[73px] items-center justify-center rounded-[11px] border-2 border-[#d9d9d9] bg-white text-[#1f1f1f] shadow-[0_3px_0_rgba(0,0,0,0.02)]">
      {children}
    </button>
  );
}

function LocationCard() {
  return (
    <div className="h-[822px] shrink-0 rounded-[15px] border-2 border-[#f0f0f0] font-[Inter] text-[29.300px]">
      <div className="pl-[47px] pt-[43px]">
        <AiOutlineHome className="-ml-[5px] h-[75px] w-[75px] text-[#fb7a24]" />
        <div className="mt-[22px] h-[54px] text-[39px] font-semibold leading-[54px] text-[#1f1f1f]">RT-01</div>
        <div className="mt-[17px]">
          <Field label="Latitude:" value="32.380197379" loose />
          <Field label="Longitude:" value="-117.069637789" loose />
          <Field label="Company:" value="WareBox" />
        </div>
      </div>
      <div className="ml-[17px] mt-[20px] flex flex-col gap-[15px]">
        <ActionButton>
          <AiOutlineEye className="h-[33.500px] w-[33.500px]" />
        </ActionButton>
        <ActionButton>
          <AiOutlineEdit className="h-[33.500px] w-[33.500px]" />
        </ActionButton>
        <ActionButton>
          <AiOutlineDelete className="h-[33.500px] w-[33.500px]" />
        </ActionButton>
      </div>
    </div>
  );
}

function Content() {
  return (
    <main className="mt-[25px] min-w-0 flex-1 overflow-hidden rounded-tl-[22px] bg-[#edf1f6] pl-[36px] pr-[13px] pt-[37px]">
      <div className="h-full rounded-t-[22px] bg-white pt-[74px]">
        <h1 className="ml-[74px] h-[42px] font-[Roboto] text-[33px] font-medium leading-[42px] text-[#121926]">Locations</h1>
        <div className="ml-[30px] mr-[29px] mt-[45px] h-[2px] bg-[#e3e6ea]" />
        <div className="ml-[74px] mt-[44px] flex h-[58px] w-[940px] items-center font-[Inter]">
          <h2 className="w-[303px] whitespace-nowrap pt-[2px] text-[36.600px] font-semibold tracking-[-1.100px] text-[#1f1f1f]">View locations</h2>
          <div className="flex h-[58px] w-[363px] items-center rounded-[11px] border-2 border-[#d9d9d9] pl-[20px]">
            <svg viewBox="0 0 26 26" className="h-[26px] w-[26px] shrink-0" fill="none" stroke="#1f1f1f">
              <circle cx="10" cy="10" r="7.500" strokeWidth="2.400" />
              <path d="M15.500 15.500L23 23" strokeWidth="3.200" />
            </svg>
            <span className="ml-[8px] pt-px text-[25.600px] tracking-[-0.540px] text-[#bfbfbf]">Search by name</span>
          </div>
          <div className="flex-1" />
          <button className="flex h-[58px] w-[215px] items-center justify-center rounded-[11px] bg-[#1677ff] pt-[2px] text-[25.600px] tracking-[-0.430px] text-white">
            Add Location
          </button>
        </div>
        <div className="ml-[74px] mt-[37px] flex w-[940px] gap-[30px]">
          <MapPanel />
          <div className="flex flex-1 flex-col gap-[19px]">
            <LocationCard />
            <div className="h-[100px] shrink-0 rounded-[15px] border-2 border-[#f0f0f0]" />
          </div>
        </div>
      </div>
    </main>
  );
}

export default function App() {
  return (
    <div className="flex h-[1436px] w-full flex-col overflow-hidden bg-white">
      <BrowserBar />
      <Header />
      <div className="flex min-h-0 flex-1">
        <Sidebar />
        <Content />
      </div>
    </div>
  );
}
